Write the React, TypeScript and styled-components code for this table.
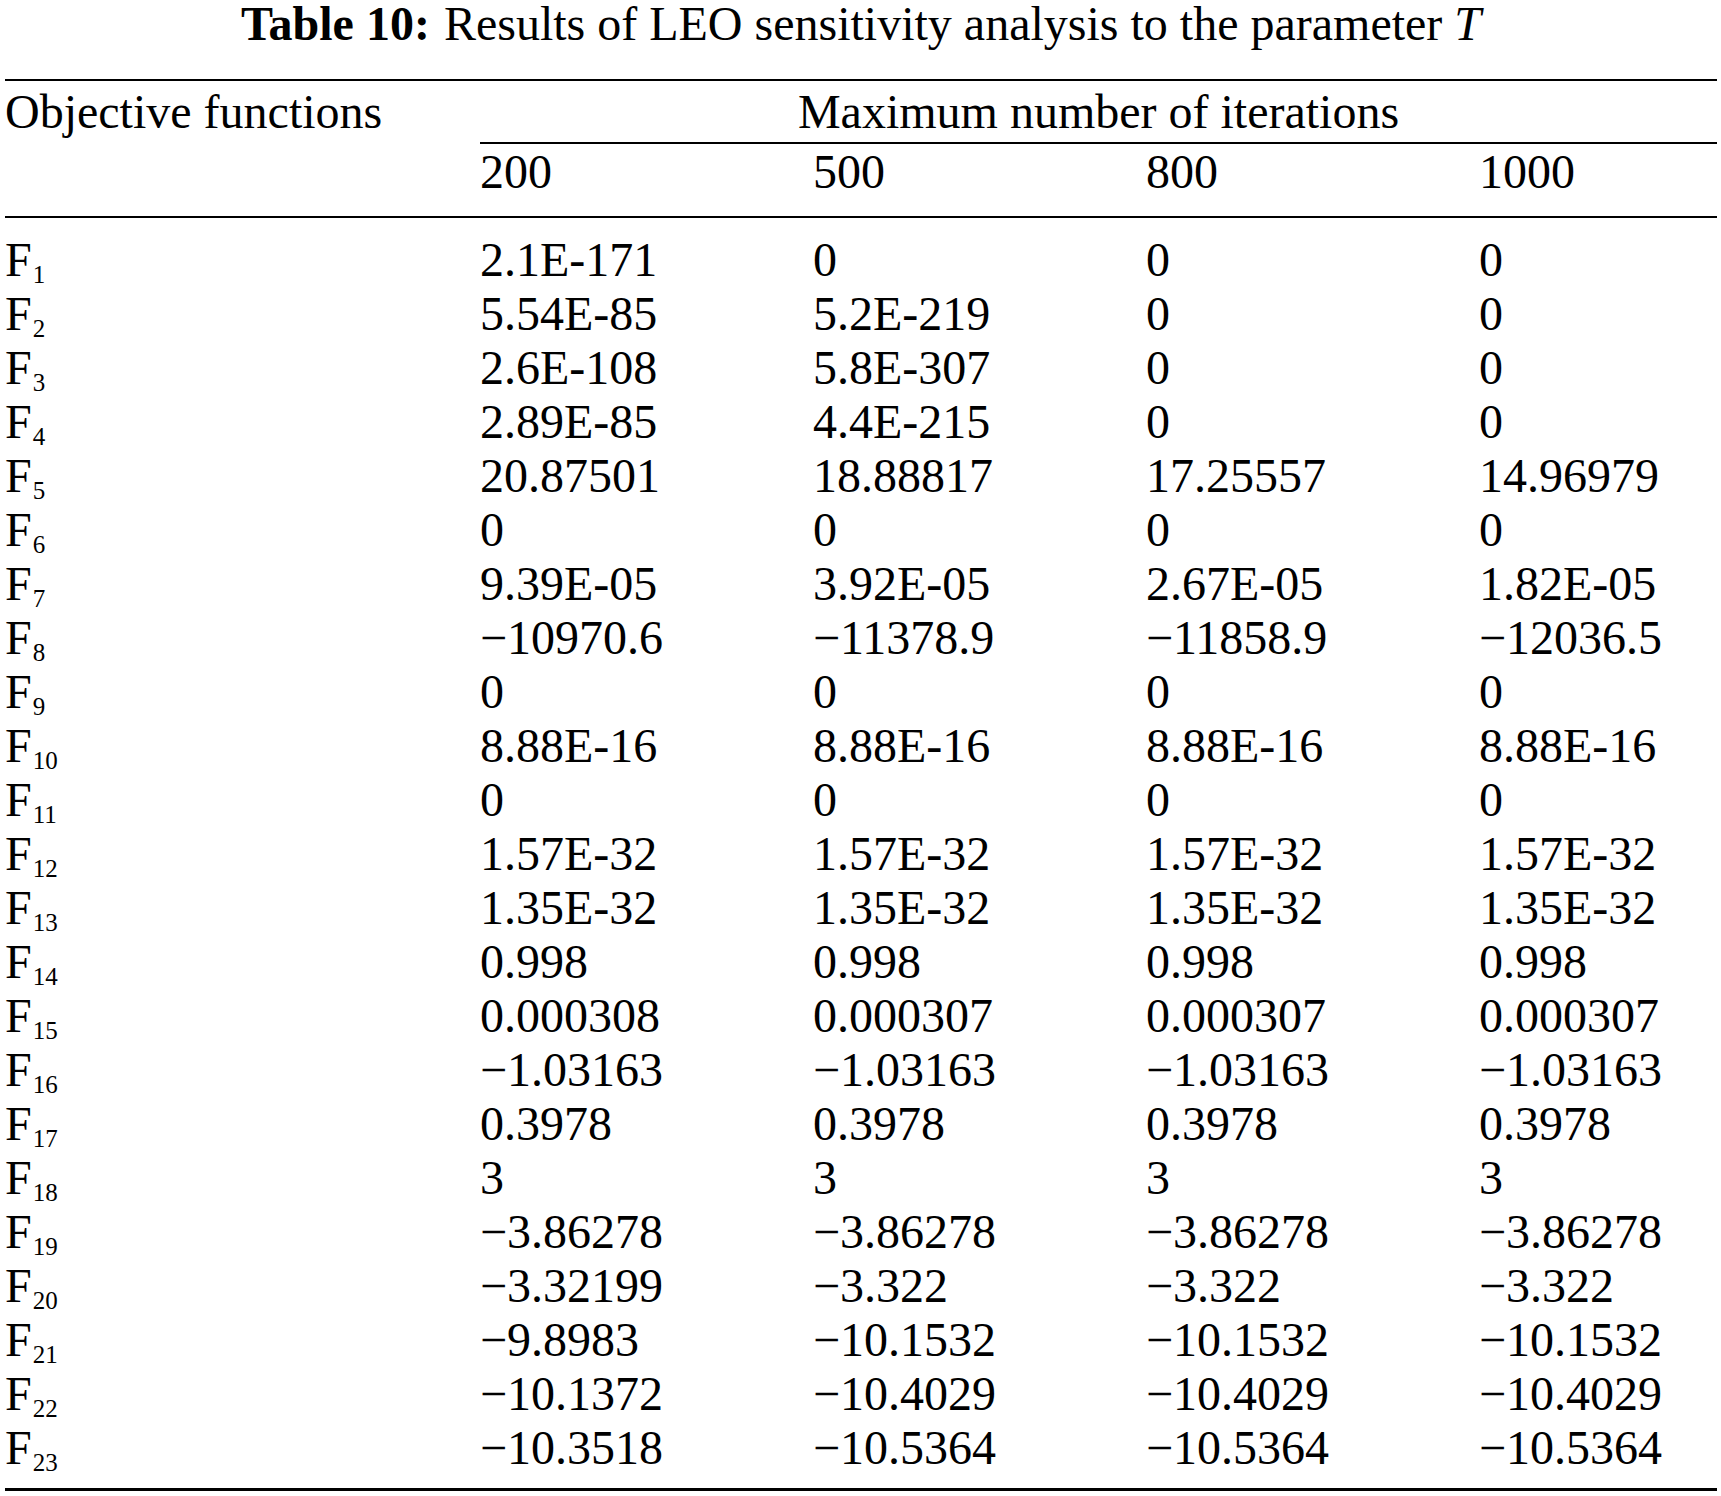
import React from "react";
import styled, { createGlobalStyle } from "styled-components";

const GlobalStyle = createGlobalStyle`
  html, body {
    margin: 0;
    padding: 0;
    background: #ffffff;
  }
  body {
    font-family: "Liberation Serif", "Times New Roman", serif;
    color: #000000;
  }
`;

const Page = styled.div`
  padding: 0 4px 0 5px;
  font-size: 48px;
`;

const Caption = styled.div`
  height: 48px;
  line-height: 48px;
  text-align: center;
  white-space: nowrap;
  margin-bottom: 31px;
`;

const CaptionLabel = styled.b`
  font-weight: 700;
  margin-right: 14px;
`;

const Param = styled.i`
  font-style: italic;
`;

const Table = styled.table`
  width: 100%;
  table-layout: fixed;
  border-collapse: separate;
  border-spacing: 0;
  border-top: 2px solid #000;
  border-bottom: 3px solid #000;
`;

const HeadCell = styled.th<{ $center?: boolean; $rule?: boolean; $top?: number; $bottom?: number }>`
  font-weight: 400;
  line-height: 54px;
  height: 54px;
  text-align: ${(p) => (p.$center ? "center" : "left")};
  vertical-align: top;
  white-space: nowrap;
  padding: ${(p) => p.$top ?? 0}px 0 ${(p) => p.$bottom ?? 0}px 0;
  border-bottom: ${(p) => (p.$rule ? "2px solid #000" : "none")};
`;

const Cell = styled.td<{ $first?: boolean; $last?: boolean }>`
  line-height: 54px;
  height: 54px;
  white-space: nowrap;
  vertical-align: top;
  padding: ${(p) => (p.$first ? 15 : 0)}px 0 ${(p) => (p.$last ? 13 : 0)}px 0;
`;

const Sub = styled.sub`
  font-size: 25px;
  line-height: 0;
  vertical-align: -7px;
  margin-left: 1px;
`;

const iterations = ["200", "500", "800", "1000"];

const rows: string[][] = [
  ["2.1E-171", "0", "0", "0"],
  ["5.54E-85", "5.2E-219", "0", "0"],
  ["2.6E-108", "5.8E-307", "0", "0"],
  ["2.89E-85", "4.4E-215", "0", "0"],
  ["20.87501", "18.88817", "17.25557", "14.96979"],
  ["0", "0", "0", "0"],
  ["9.39E-05", "3.92E-05", "2.67E-05", "1.82E-05"],
  ["\u221210970.6", "\u221211378.9", "\u221211858.9", "\u221212036.5"],
  ["0", "0", "0", "0"],
  ["8.88E-16", "8.88E-16", "8.88E-16", "8.88E-16"],
  ["0", "0", "0", "0"],
  ["1.57E-32", "1.57E-32", "1.57E-32", "1.57E-32"],
  ["1.35E-32", "1.35E-32", "1.35E-32", "1.35E-32"],
  ["0.998", "0.998", "0.998", "0.998"],
  ["0.000308", "0.000307", "0.000307", "0.000307"],
  ["\u22121.03163", "\u22121.03163", "\u22121.03163", "\u22121.03163"],
  ["0.3978", "0.3978", "0.3978", "0.3978"],
  ["3", "3", "3", "3"],
  ["\u22123.86278", "\u22123.86278", "\u22123.86278", "\u22123.86278"],
  ["\u22123.32199", "\u22123.322", "\u22123.322", "\u22123.322"],
  ["\u22129.8983", "\u221210.1532", "\u221210.1532", "\u221210.1532"],
  ["\u221210.1372", "\u221210.4029", "\u221210.4029", "\u221210.4029"],
  ["\u221210.3518", "\u221210.5364", "\u221210.5364", "\u221210.5364"],
];

export default function App() {
  const last = rows.length - 1;
  return (
    <>
      <GlobalStyle />
      <Page>
        <Caption>
          <CaptionLabel>Table 10:</CaptionLabel>
          Results of LEO sensitivity analysis to the parameter <Param>T</Param>
        </Caption>
        <Table>
          <colgroup>
            <col style={{ width: 475 }} />
            <col style={{ width: 333 }} />
            <col style={{ width: 333 }} />
            <col style={{ width: 333 }} />
            <col />
          </colgroup>
          <thead>
            <tr>
              <HeadCell $top={4} $bottom={3}>
                Objective functions
              </HeadCell>
              <HeadCell colSpan={4} $center $rule $top={4} $bottom={3}>
                Maximum number of iterations
              </HeadCell>
            </tr>
            <tr>
              <HeadCell $rule $top={1} $bottom={17} />
              {iterations.map((it) => (
                <HeadCell key={it} $rule $top={1} $bottom={17}>
                  {it}
                </HeadCell>
              ))}
            </tr>
          </thead>
          <tbody>
            {rows.map((values, i) => (
              <tr key={i}>
                <Cell $first={i === 0} $last={i === last}>
                  F<Sub>{i + 1}</Sub>
                </Cell>
                {values.map((v, j) => (
                  <Cell key={j} $first={i === 0} $last={i === last}>
                    {v}
                  </Cell>
                ))}
              </tr>
            ))}
          </tbody>
        </Table>
      </Page>
    </>
  );
}
